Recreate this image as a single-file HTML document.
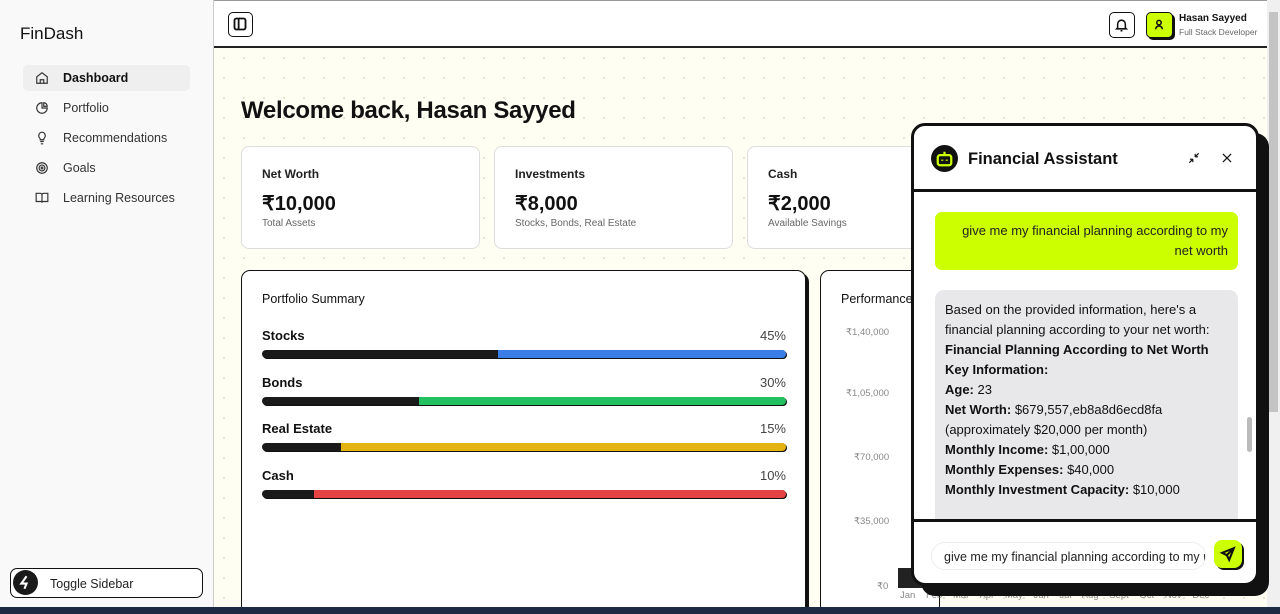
<!DOCTYPE html>
<html><head><meta charset="utf-8"><style>
*{box-sizing:border-box;margin:0;padding:0}
html,body{width:1280px;height:614px;overflow:hidden}
body{font-family:"Liberation Sans",sans-serif;background:#fff;position:relative;color:#111}
.sb{position:absolute;left:0;top:0;width:214px;height:607px;background:#f9f9f9;border-right:1px solid #ccc}
.logo{position:absolute;left:20px;top:24px;font-size:17px;color:#111}
.nav{position:absolute;left:23px;width:167px;height:26px;font-size:12.5px;color:#333;display:flex;align-items:center;padding-left:40px}
.nav svg{position:absolute;left:12px;top:6px}
.nav.act{background:#efefef;border-radius:5px;color:#111;font-weight:bold}
.tog{position:absolute;left:10px;top:568px;width:193px;height:30px;border:1.5px solid #111;border-radius:7px;background:#fff;font-size:12.5px;padding:8px 0 0 39px;color:#222}
.tog .c{position:absolute;left:2px;top:1px;width:25px;height:25px;border-radius:50%;background:#1a1a1a}
.hdr{position:absolute;left:214px;top:0;width:1053px;height:48px;background:#fff;border-bottom:2px solid #222;border-top:1px solid #999}
.main{position:absolute;left:214px;top:48px;width:1053px;height:559px;background-color:#fffef2;background-image:radial-gradient(#e4e2d2 1px,transparent 1.2px);background-size:20px 20px}
.scroll{position:absolute;left:1267px;top:0;width:13px;height:607px;background:#f0f0f0}
.task{position:absolute;left:0;top:607px;width:1280px;height:7px;background:#1c2a44;z-index:10}
h1{position:absolute;left:241px;top:97px;font-size:24px;font-weight:bold;letter-spacing:-0.3px}
.card{position:absolute;top:146px;height:103px;width:239px;background:#fff;border:1px solid #ddd;border-radius:8px;padding:20px 20px}
.card .t{font-size:12px;font-weight:bold;color:#222}
.card .v{font-size:20px;font-weight:bold;margin-top:10px}
.card .s{font-size:10px;color:#666;margin-top:2px}
.big{position:absolute;top:270px;background:#fff;border:1.5px solid #111;border-radius:9px;box-shadow:3px 3px 0 #111}
.row{position:absolute;left:20px;width:524px;font-size:13px}
.row b{position:absolute;left:0;top:0}
.row span{position:absolute;right:0;top:0;color:#444}
.bar{position:absolute;left:0;top:22px;width:524px;height:8px;border-radius:4px;background:#1a1a1a;overflow:hidden;box-shadow:1px 1px 0 #111}
.bar i{position:absolute;right:0;top:0;height:8px}
.yl{position:absolute;left:25px;font-size:9.5px;color:#888}
.chat{position:absolute;left:911px;top:123px;width:348px;height:463px;background:#fff;border:3px solid #111;border-radius:14px;box-shadow:10px 10px 0 #111;overflow:hidden;z-index:5}
.ch{height:66px;border-bottom:3px solid #111;position:relative}
.msgs{position:absolute;top:66px;left:0;right:0;height:330px;border-bottom:3px solid #111;overflow:hidden}
.um{position:absolute;left:21px;top:20px;width:303px;height:58px;background:#ccff00;border-radius:7px;font-size:13px;text-align:right;padding:9px 10px;line-height:20px;color:#222}
.bm{position:absolute;left:21px;top:98px;width:303px;height:240px;background:#e8e8ea;border-radius:9px;font-size:13px;padding:10px 10px;line-height:20px;color:#111}
</style></head><body>
<div class="sb">
<div class="logo">FinDash</div>
<div class="nav act" style="top:65px"><svg width="14" height="14" viewBox="0 0 24 24" fill="none" stroke="#333" stroke-width="2"><path d="M3 10l9-7 9 7v11H3z"/><path d="M9 21v-6h6v6"/></svg>Dashboard</div>
<div class="nav" style="top:95px"><svg width="14" height="14" viewBox="0 0 24 24" fill="none" stroke="#333" stroke-width="2"><path d="M21 12A9 9 0 1 1 12 3v9z"/><path d="M15 3a6 6 0 0 1 6 6h-6z"/></svg>Portfolio</div>
<div class="nav" style="top:125px"><svg width="14" height="14" viewBox="0 0 24 24" fill="none" stroke="#333" stroke-width="2"><path d="M9 18h6M10 22h4M12 2a6 6 0 0 0-4 10c1 1 1 2 1 3h6c0-1 0-2 1-3a6 6 0 0 0-4-10z"/></svg>Recommendations</div>
<div class="nav" style="top:155px"><svg width="14" height="14" viewBox="0 0 24 24" fill="none" stroke="#333" stroke-width="2"><circle cx="12" cy="12" r="9"/><circle cx="12" cy="12" r="5"/><circle cx="12" cy="12" r="1.5"/></svg>Goals</div>
<div class="nav" style="top:185px"><svg width="14" height="14" viewBox="0 0 24 24" fill="none" stroke="#333" stroke-width="2"><path d="M2 4h7a3 3 0 0 1 3 3v13a2 2 0 0 0-2-2H2zM22 4h-7a3 3 0 0 0-3 3v13a2 2 0 0 1 2-2h8z"/></svg>Learning Resources</div>
<div class="tog"><div class="c"><svg width="25" height="25" viewBox="0 0 24 24" fill="none" stroke="#fff" stroke-width="2"><path d="M13 6l-5 7h5l-2 5"/></svg></div>Toggle Sidebar</div>
</div>
<div class="hdr">
<div style="position:absolute;left:14px;top:11px;width:25px;height:25px;border:1.5px solid #111;border-radius:5px"><svg width="22" height="22" viewBox="0 0 24 24" fill="none" stroke="#111" stroke-width="2"><rect x="6" y="6" width="12" height="12" rx="2"/><path d="M10.5 6v12"/></svg></div>
<div style="position:absolute;left:895px;top:11px;width:26px;height:26px;border:1.5px solid #111;border-radius:5px"><svg width="23" height="23" viewBox="0 0 24 24" fill="none" stroke="#111" stroke-width="1.6"><path d="M8 15.5V11.5a4 4 0 0 1 8 0v4l1 1H7z"/><path d="M11 18.5h2"/></svg></div>
<div style="position:absolute;left:932px;top:11px;width:27px;height:26px;background:#ccff00;border:1.5px solid #111;border-radius:5px;box-shadow:2px 2px 0 #111"><svg width="24" height="23" viewBox="0 0 24 24" fill="none" stroke="#111" stroke-width="1.6"><circle cx="12" cy="10" r="2.3"/><path d="M8.5 17a3.5 3.5 0 0 1 7 0"/></svg></div>
<div style="position:absolute;left:965px;top:12px;font-size:10px;font-weight:bold">Hasan Sayyed</div>
<div style="position:absolute;left:965px;top:26px;font-size:8.5px;color:#666">Full Stack Developer</div>
</div>
<div class="main"></div>
<div class="scroll"><div style="position:absolute;left:2px;top:12px;width:9px;height:400px;background:#c4c4c4"></div></div>
<div class="task"></div>
<h1>Welcome back, Hasan Sayyed</h1>
<div class="card" style="left:241px"><div class="t">Net Worth</div><div class="v">₹10,000</div><div class="s">Total Assets</div></div>
<div class="card" style="left:494px"><div class="t">Investments</div><div class="v">₹8,000</div><div class="s">Stocks, Bonds, Real Estate</div></div>
<div class="card" style="left:747px"><div class="t">Cash</div><div class="v">₹2,000</div><div class="s">Available Savings</div></div>
<div class="big" style="left:241px;width:565px;height:345px">
<div style="position:absolute;left:20px;top:21px;font-size:12.5px">Portfolio Summary</div>
<div class="row" style="top:57px"><b>Stocks</b><span>45%</span><div class="bar"><i style="width:55%;background:#3b7de6"></i></div></div>
<div class="row" style="top:104px"><b>Bonds</b><span>30%</span><div class="bar"><i style="width:70%;background:#22c05e"></i></div></div>
<div class="row" style="top:150px"><b>Real Estate</b><span>15%</span><div class="bar"><i style="width:85%;background:#e3b30f"></i></div></div>
<div class="row" style="top:197px"><b>Cash</b><span>10%</span><div class="bar"><i style="width:90%;background:#e54343"></i></div></div>
</div>
<div class="big" style="left:820px;width:120px;height:345px;box-shadow:none">
<div style="position:absolute;left:20px;top:21px;font-size:12.5px">Performance</div>
<div class="yl" style="top:56px">₹1,40,000</div><div class="yl" style="top:117px">₹1,05,000</div><div class="yl" style="left:33px;top:181px">₹70,000</div><div class="yl" style="left:33px;top:245px">₹35,000</div><div class="yl" style="left:56px;top:310px">₹0</div>
<div style="position:absolute;left:77px;top:297px;width:40px;height:20px;background:#222"></div>
</div>
<div style="position:absolute;left:900px;top:590px;font-size:9.5px;color:#888;word-spacing:8px">Jan Feb Mar Apr May Jun Jul Aug Sept Oct Nov Dec</div>
<div class="chat">
<div class="ch">
<div style="position:absolute;left:17px;top:19px;width:27px;height:27px;border-radius:50%;background:#111"><svg width="27" height="27" viewBox="0 0 24 24" fill="none" stroke="#ccff00" stroke-width="2"><rect x="6" y="9" width="12" height="9" rx="2"/><path d="M12 9V6M10 13v1M14 13v1"/></svg></div>
<div style="position:absolute;left:54px;top:24px;font-size:16.5px;font-weight:bold">Financial Assistant</div>
<svg style="position:absolute;left:273px;top:25px" width="14" height="14" viewBox="0 0 24 24" fill="none" stroke="#111" stroke-width="2"><path d="M4 20l6-6M10 14H5M10 14v5M20 4l-6 6M14 10h5M14 10V5"/></svg>
<svg style="position:absolute;left:306px;top:25px" width="14" height="14" viewBox="0 0 24 24" fill="none" stroke="#111" stroke-width="2"><path d="M5 5l14 14M19 5L5 19"/></svg>
</div>
<div class="msgs">
<div class="um">give me my financial planning according to my net worth</div>
<div class="bm">Based on the provided information, here's a financial planning according to your net worth:<br><b>Financial Planning According to Net Worth</b><br><b>Key Information:</b><br><b>Age:</b> 23<br><b>Net Worth:</b> $679,557,eb8a8d6ecd8fa (approximately $20,000 per month)<br><b>Monthly Income:</b> $1,00,000<br><b>Monthly Expenses:</b> $40,000<br><b>Monthly Investment Capacity:</b> $10,000</div>
<div style="position:absolute;right:4px;top:225px;width:5px;height:35px;background:#bbb;border-radius:3px"></div>
</div>
<div style="position:absolute;left:17px;top:416px;width:275px;height:28px;border-radius:14px;border:1px solid #eee;font-size:12.5px;padding:7px 0 0 12px;white-space:nowrap;overflow:hidden;color:#222">give me my financial planning according to my net worth</div>
<div style="position:absolute;left:300px;top:414px;width:28px;height:28px;background:#ccff00;border-radius:8px;box-shadow:2px 2px 0 #111"><svg width="28" height="28" viewBox="0 0 24 24" fill="none" stroke="#111" stroke-width="1.8"><path d="M17 7L7 11l4 2 2 4z"/><path d="M11 13l6-6"/></svg></div>
</div>
</body></html>
